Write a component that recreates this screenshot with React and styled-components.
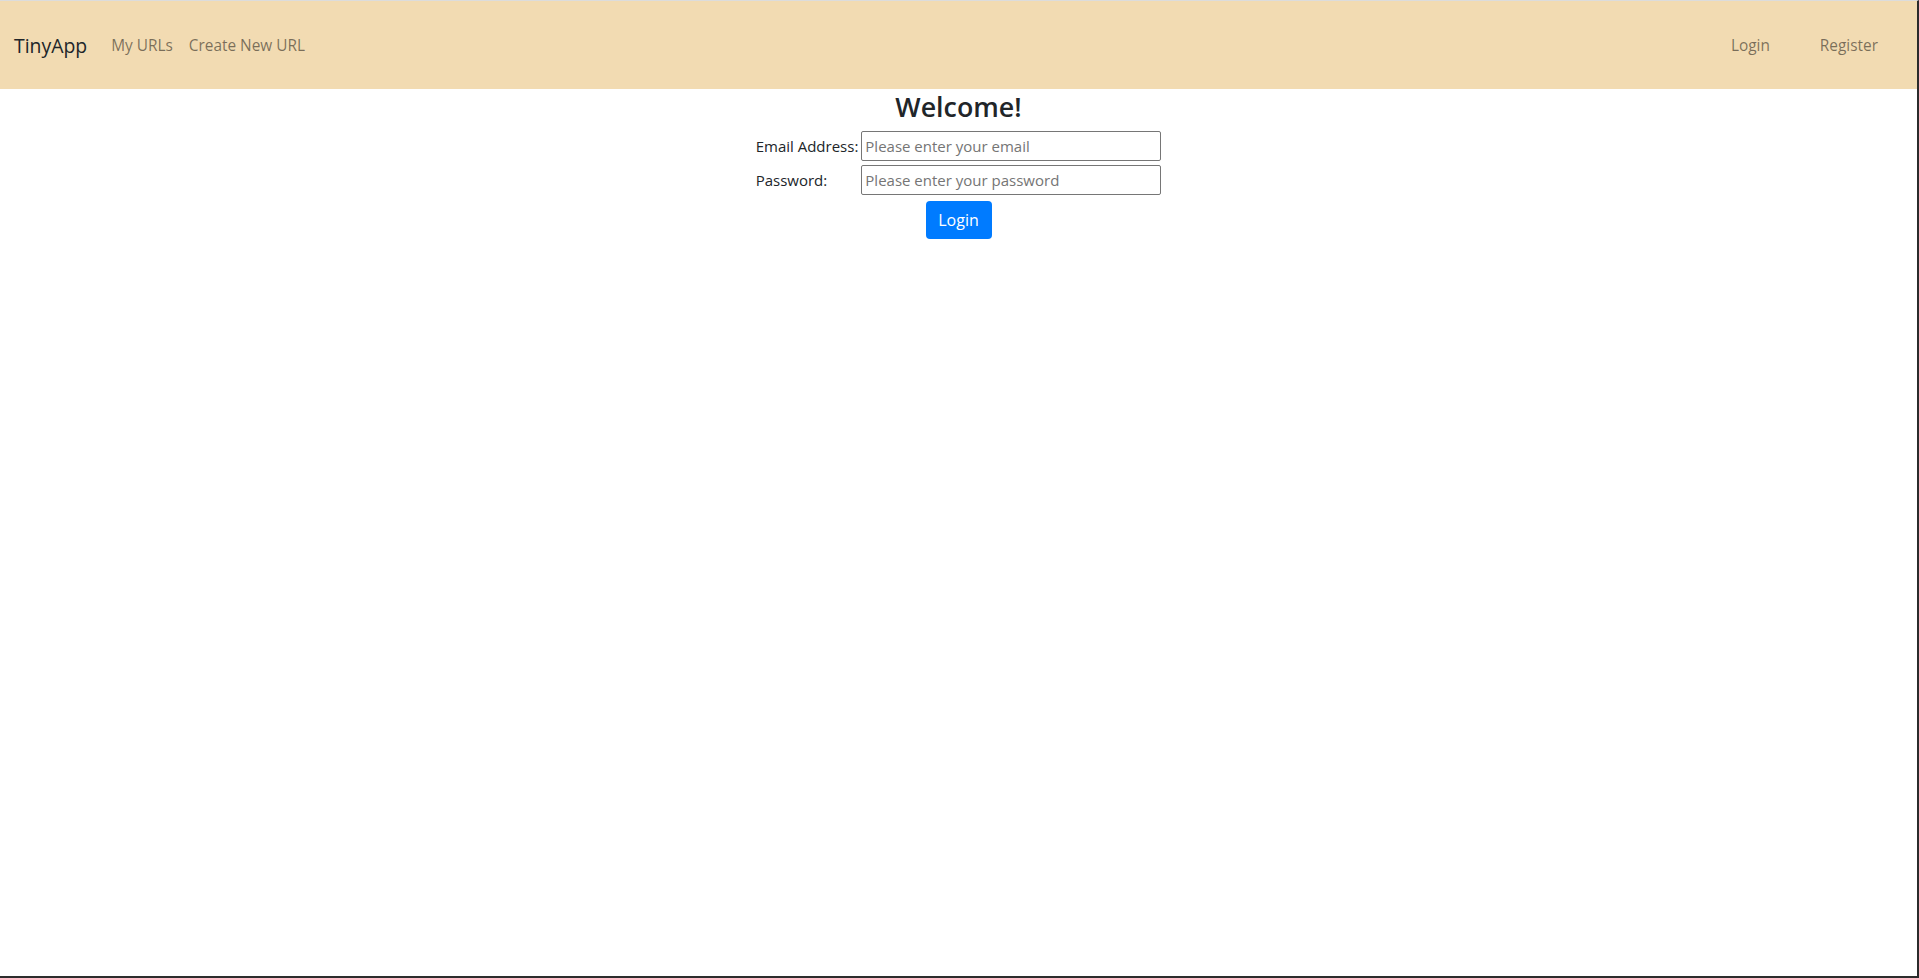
import React from "react";
import styled, { createGlobalStyle } from "styled-components";

const GlobalStyle = createGlobalStyle`
  * {
    box-sizing: border-box;
  }
  html, body {
    margin: 0;
    padding: 0;
    height: 100%;
  }
  body {
    font-family: "Segoe UI", "Open Sans", "Liberation Sans", sans-serif;
    font-size: 16px;
    color: #212529;
    background: #ffffff;
  }
`;

const Frame = styled.div`
  min-height: 100vh;
  border-top: 1px solid #dcdcdc;
  border-right: 2px solid #2b2b2b;
  border-bottom: 2px solid #2d2d2d;
  display: flex;
  flex-direction: column;
`;

const Navbar = styled.nav`
  height: 88px;
  background: #f2dbb2;
  display: flex;
  align-items: center;
  padding: 0 14px 0 14px;
`;

const Brand = styled.a`
  font-size: 19.4px;
  color: #212529;
  margin-right: 16px;
  text-decoration: none;
`;

const NavGroup = styled.div`
  display: flex;
  align-items: center;
  margin-left: ${(p) => (p.$right ? "auto" : "0")};
`;

const NavLink = styled.a`
  font-size: 15.4px;
  color: rgba(0, 0, 0, 0.5);
  text-decoration: none;
  padding: 0 ${(p) => (p.$wide ? "25px" : "8px")};
`;

const Main = styled.main`
  display: flex;
  flex-direction: column;
  align-items: center;
`;

const Heading = styled.h3`
  font-size: 26.8px;
  font-weight: 600;
  line-height: 1.2;
  margin: 2px 0 8px;
`;

const FormTable = styled.div`
  display: grid;
  grid-template-columns: auto 300px;
  column-gap: 3px;
  row-gap: 4px;
  align-items: center;
`;

const Label = styled.label`
  font-size: 15px;
  color: #212529;
`;

const Input = styled.input`
  width: 300px;
  height: 30px;
  border: 1px solid #767676;
  border-radius: 2px;
  padding: 1px 3px;
  font-family: inherit;
  font-size: 15px;
  color: #212529;
  &::placeholder {
    color: #757575;
  }
`;

const Button = styled.button`
  margin-top: 6px;
  width: 66px;
  height: 38px;
  background: #007bff;
  color: #ffffff;
  border: none;
  border-radius: 4px;
  font-family: inherit;
  font-size: 16px;
`;

const App = () => {
  return (
    <Frame>
      <GlobalStyle />
      <Navbar>
        <Brand href="#">TinyApp</Brand>
        <NavGroup>
          <NavLink href="#">My URLs</NavLink>
          <NavLink href="#">Create New URL</NavLink>
        </NavGroup>
        <NavGroup $right>
          <NavLink $wide href="#">Login</NavLink>
          <NavLink $wide href="#">Register</NavLink>
        </NavGroup>
      </Navbar>
      <Main>
        <Heading>Welcome!</Heading>
        <FormTable>
          <Label htmlFor="email">Email Address:</Label>
          <Input id="email" type="email" placeholder="Please enter your email" />
          <Label htmlFor="password">Password:</Label>
          <Input id="password" type="password" placeholder="Please enter your password" />
        </FormTable>
        <Button>Login</Button>
      </Main>
    </Frame>
  );
};

export default App;
